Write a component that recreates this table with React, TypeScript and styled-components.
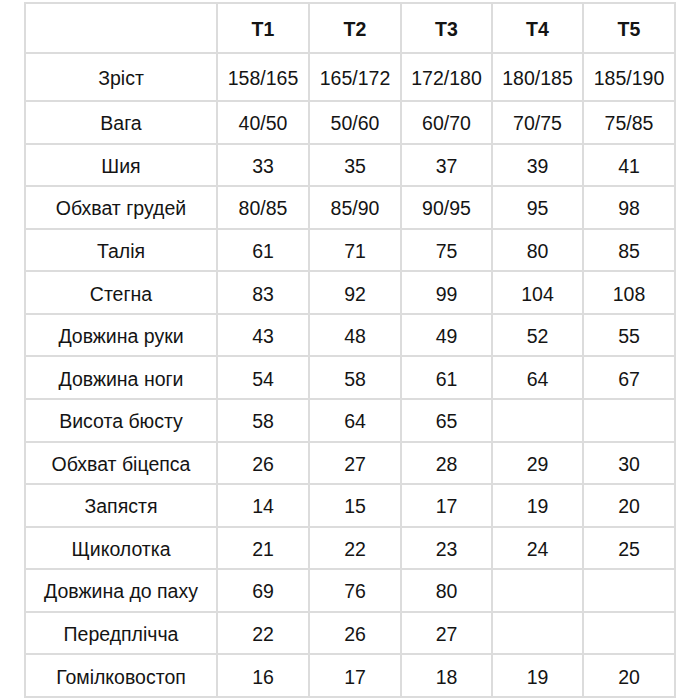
import { createGlobalStyle, styled } from "styled-components";

const GlobalStyle = createGlobalStyle`
  html, body {
    margin: 0;
    padding: 0;
    background: #ffffff;
  }
  body {
    font-family: "Liberation Sans", Arial, sans-serif;
  }
`;

const Page = styled.div`
  padding: 2px 0 0 24px;
`;

const Table = styled.table`
  width: 652px;
  table-layout: fixed;
  border-collapse: collapse;
  color: #141414;
  font-size: 19.5px;
`;

const Row = styled.tr<{ $h: number }>`
  height: ${({ $h }) => $h}px;
`;

const Cell = styled.td<{ $bold?: boolean }>`
  border: 2px solid #dcdcdc;
  padding: 3px 0 0;
  text-align: center;
  vertical-align: middle;
  font-weight: ${({ $bold }) => ($bold ? 700 : 400)};
  white-space: nowrap;
`;

const widths = [192, 92, 92, 91, 91, 92];

const rows: [string, string[]][] = [
  ["Зріст", ["158/165", "165/172", "172/180", "180/185", "185/190"]],
  ["Вага", ["40/50", "50/60", "60/70", "70/75", "75/85"]],
  ["Шия", ["33", "35", "37", "39", "41"]],
  ["Обхват грудей", ["80/85", "85/90", "90/95", "95", "98"]],
  ["Талія", ["61", "71", "75", "80", "85"]],
  ["Стегна", ["83", "92", "99", "104", "108"]],
  ["Довжина руки", ["43", "48", "49", "52", "55"]],
  ["Довжина ноги", ["54", "58", "61", "64", "67"]],
  ["Висота бюсту", ["58", "64", "65", "", ""]],
  ["Обхват біцепса", ["26", "27", "28", "29", "30"]],
  ["Запястя", ["14", "15", "17", "19", "20"]],
  ["Щиколотка", ["21", "22", "23", "24", "25"]],
  ["Довжина до паху", ["69", "76", "80", "", ""]],
  ["Передплічча", ["22", "26", "27", "", ""]],
  ["Гомілковостоп", ["16", "17", "18", "19", "20"]],
];

export default function App() {
  return (
    <Page>
      <GlobalStyle />
      <Table>
        <colgroup>
          {widths.map((w, i) => (
            <col key={i} style={{ width: w }} />
          ))}
        </colgroup>
        <tbody>
          <Row $h={50}>
            <Cell />
            {["T1", "T2", "T3", "T4", "T5"].map((t) => (
              <Cell key={t} $bold>
                {t}
              </Cell>
            ))}
          </Row>
          {rows.map(([label, vals], i) => (
            <Row key={label} $h={i === 0 ? 48 : 42.57}>
              <Cell>{label}</Cell>
              {vals.map((v, j) => (
                <Cell key={j}>{v}</Cell>
              ))}
            </Row>
          ))}
        </tbody>
      </Table>
    </Page>
  );
}
